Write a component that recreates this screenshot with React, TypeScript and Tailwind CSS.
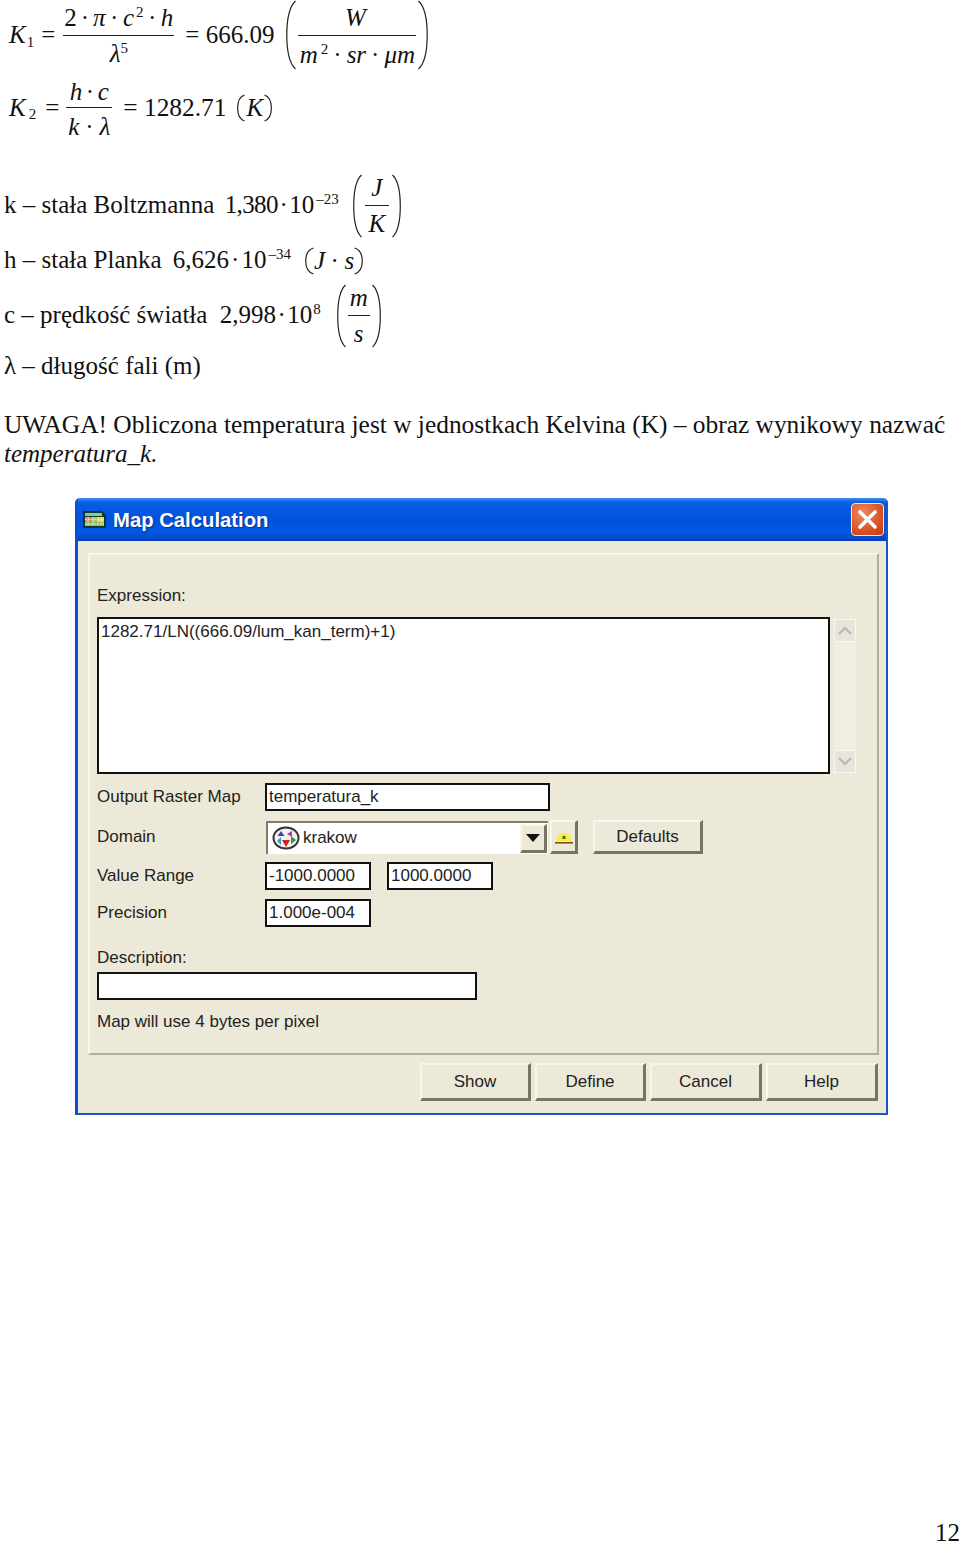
import React, { FC, ReactNode } from "react";

const Paren: FC<{ side: "l" | "r"; w: number; h: number }> = ({ side, w, h }) => {
    const d =
        side === "l"
            ? `M${w - 0.5} 1 C${w * 0.3} ${h * 0.1} ${w * 0.08} ${h * 0.3} ${w * 0.08} ${h / 2} C${w * 0.08} ${h * 0.7} ${w * 0.3} ${h * 0.9} ${w - 0.5} ${h - 1}`
            : `M0.5 1 C${w * 0.7} ${h * 0.1} ${w * 0.92} ${h * 0.3} ${w * 0.92} ${h / 2} C${w * 0.92} ${h * 0.7} ${w * 0.7} ${h * 0.9} 0.5 ${h - 1}`;
    return (
        <svg width={w} height={h} className="shrink-0" fill="none" stroke="#222" strokeWidth="1.2">
            <path d={d} />
        </svg>
    );
};

const Frac: FC<{ top: ReactNode; bottom: ReactNode; className: string }> = ({ top, bottom, className }) => (
    <div className={`flex flex-col items-center shrink-0 ${className}`}>
        <div className="h-[35px] flex items-center whitespace-pre">{top}</div>
        <div className="h-px w-full bg-[#222]" />
        <div className="h-[35px] flex items-center whitespace-pre">{bottom}</div>
    </div>
);

const Sup: FC<{ children: ReactNode }> = ({ children }) => (
    <span className="text-[15px] relative top-[-9px] ml-[2px]">{children}</span>
);

const Dot: FC<{ className: string }> = ({ className }) => <span className={className}>·</span>;

const Btn: FC<{ children?: ReactNode; className: string }> = ({ children, className }) => (
    <div className={`flex items-center justify-center shrink-0 border-t-2 border-l-2 border-r-[3px] border-b-[3px] border-t-[#f7f5ec] border-l-[#f7f5ec] border-r-[#77745f] border-b-[#77745f] bg-[#ece9d8] ${className}`}>
        {children}
    </div>
);

const Field: FC<{ children?: ReactNode; className: string }> = ({ children, className }) => (
    <div className={`border-2 border-[#111] bg-white pl-[2px] h-[28px] flex items-center shrink-0 ${className}`}>{children}</div>
);

const FieldRow: FC<{ label: string; className: string; children: ReactNode }> = ({ label, className, children }) => (
    <div className={`flex items-center ${className}`}>
        <div className="w-[168px] shrink-0 text-[#222]">{label}</div>
        {children}
    </div>
);

export default function App() {
    return (
        <div className="w-[960px] h-[1543px] bg-white text-[#111] overflow-hidden flex flex-col font-['Liberation_Serif',serif]">
            {/* formulas */}
            <div className="h-[70px] pl-[9px] flex items-center text-[25px] shrink-0">
                <i>K</i>
                <span className="text-[15px] relative top-[7px] ml-[1px]">1</span>
                <span className="ml-[7px]">=</span>
                <Frac
                    className="w-[111px] ml-[8px]"
                    top={
                        <span className="relative top-[1px]">
                            2<Dot className="mx-[4px]" /><i>π</i><Dot className="mx-[4.500px]" /><i>c</i>
                            <Sup>2</Sup>
                            <Dot className="mx-[4.500px]" /><i>h</i>
                        </span>
                    }
                    bottom={<span className="relative top-[1px]"><i>λ</i><span className="ml-[-2px]"><Sup>5</Sup></span></span>}
                />
                <span className="ml-[11px]">= 666.09</span>
                <div className="ml-[12px] flex items-center">
                    <Paren side="l" w={10} h={70} />
                    <Frac
                        className="w-[118px] mx-[2px]"
                        top={<i className="relative left-[-2px] top-[1px]">W</i>}
                        bottom={
                            <span className="relative top-[2px]">
                                <i>m</i><span className="ml-[1px]"><Sup>2</Sup></span>
                                <Dot className="mx-[5px]" /><i>sr</i><Dot className="mx-[5px]" /><i>μm</i>
                            </span>
                        }
                    />
                    <Paren side="r" w={10} h={70} />
                </div>
            </div>
            <div className="h-[71px] mt-[2px] pl-[9px] flex items-center text-[25px] shrink-0">
                <i>K</i>
                <span className="text-[15px] relative top-[7px] ml-[3px]">2</span>
                <span className="ml-[9px]">=</span>
                <Frac
                    className="w-[46px] ml-[7px]"
                    top={<span className="relative top-[2px]"><i>h</i><Dot className="mx-[3.500px]" /><i>c</i></span>}
                    bottom={<span className="relative top-[1px]"><i>k</i><Dot className="mx-[6px]" /><i>λ</i></span>}
                />
                <span className="ml-[11px] text-[25.400px]">= 1282.71</span>
                <span className="ml-[11px] flex items-center">
                    <Paren side="l" w={8} h={28} />
                    <i className="mx-[1px]">K</i>
                    <Paren side="r" w={8} h={28} />
                </span>
            </div>

            <div className="h-[65px] mt-[30px] pl-[4px] flex items-center text-[25px] whitespace-pre shrink-0">
                <span className="relative top-[-1px]">
                    k – stała Boltzmanna <span className="ml-[4px] tracking-[-0.600px]">1,380</span><Dot className="mx-[1.500px]" />10<Sup>–23</Sup>
                </span>
                <div className="ml-[14px] flex items-center">
                    <Paren side="l" w={9} h={64} />
                    <Frac className="w-[24px] mx-[3px]" top={<i>J</i>} bottom={<i>K</i>} />
                    <Paren side="r" w={9} h={64} />
                </div>
            </div>
            <div className="h-[40px] mt-[3px] pl-[4px] flex items-center text-[25px] whitespace-pre shrink-0">
                <span className="relative top-[-1px]">
                    h – stała Planka <span className="ml-[5px]">6,626</span><Dot className="mx-[2px]" />10<Sup>–34</Sup>
                </span>
                <span className="ml-[14px] flex items-center">
                    <Paren side="l" w={9} h={28} />
                    <span><i>J</i><Dot className="mx-[5.500px]" /><i>s</i></span>
                    <Paren side="r" w={9} h={28} />
                </span>
            </div>
            <div className="h-[65px] mt-[2px] pl-[4px] flex items-center text-[25px] whitespace-pre shrink-0">
                <span className="relative top-[-1px]">
                    c – prędkość światła <span className="ml-[6px]">2,998</span><Dot className="mx-[1.500px]" />10<span className="ml-[-1px]"><Sup>8</Sup></span>
                </span>
                <div className="ml-[16px] flex items-center">
                    <Paren side="l" w={9} h={64} />
                    <Frac className="w-[22px] mx-[2px]" top={<i>m</i>} bottom={<i>s</i>} />
                    <Paren side="r" w={9} h={64} />
                </div>
            </div>
            <div className="pl-[4px] text-[25px] leading-[36px] h-[36px] shrink-0">λ – długość fali (m)</div>
            <div className="mt-[25px] pl-[4px] text-[25.400px] leading-[30px] whitespace-nowrap shrink-0">
                UWAGA! Obliczona temperatura jest w jednostkach Kelvina (K) – obraz wynikowy nazwać
            </div>
            <div className="pl-[4px] text-[25px] leading-[30px] italic shrink-0">temperatura_k.</div>

            {/* Map Calculation dialog */}
            <div className="ml-[75px] mt-[29px] w-[813px] h-[617px] shrink-0 flex flex-col rounded-t-[5px] overflow-hidden border-l-[3px] border-r-2 border-b-2 border-l-[#0a50d0] border-r-[#1a55c4] border-b-[#1a55c4] bg-[#ece9d8] font-['Liberation_Sans',sans-serif] text-[17px] text-[#222]">
                <div className="-ml-[3px] -mr-[2px] h-[43px] shrink-0 flex items-center pl-[7px] pr-[4px] bg-[linear-gradient(#3f8ef0_0,#0a5ce8_10%,#0052dc_55%,#0258e4_80%,#0140b8_100%)]">
                    <svg width="25" height="19" viewBox="0 0 25 19" className="shrink-0">
                        <path d="M1 1h19l4 4v13H1z" fill="#17352c" />
                        <rect x="3" y="3" width="17" height="3" fill="#6fd0b0" />
                        <rect x="3" y="7" width="7" height="5" fill="#d98a7a" />
                        <rect x="10" y="7" width="6" height="5" fill="#a9c86a" />
                        <rect x="16" y="7" width="6" height="5" fill="#ecd84a" />
                        <rect x="3" y="12" width="19" height="4" fill="#8cc46c" />
                        <path d="M3 9.500h19M3 14h19M6 7v9M11 7v9M16 7v9M20 7v9" stroke="#f4f0d0" strokeWidth="1" strokeDasharray="1.500 1.500" />
                    </svg>
                    <div className="ml-[6px] relative top-[1px] text-white font-bold text-[20.300px] [text-shadow:1px_1px_1px_#0a2f90]">Map Calculation</div>
                    <div className="ml-auto w-[33px] h-[33px] rounded-[4px] border border-[#f2e9e4] bg-[radial-gradient(circle_at_35%_30%,#ee8a60,#d94f20_65%,#bd3c12)] flex items-center justify-center">
                        <svg width="21" height="21" viewBox="0 0 21 21" stroke="white" strokeWidth="3.600" strokeLinecap="round">
                            <path d="M3 3l15 15M18 3L3 18" />
                        </svg>
                    </div>
                </div>

                <div className="ml-[10px] mr-[7px] mt-[12px] h-[502px] shrink-0 border-2 border-t-[#f8f6ee] border-l-[#f8f6ee] border-r-[#b0ad9b] border-b-[#b0ad9b] pl-[7px] flex flex-col">
                    <div className="mt-[29px] leading-[24px]">Expression:</div>
                    <div className="mt-[9px] flex shrink-0">
                        <div className="w-[733px] h-[157px] border-2 border-[#111] bg-white pl-[2px] leading-[24px] pt-[1px]">
                            1282.71/LN((666.09/lum_kan_term)+1)
                        </div>
                        <div className="ml-[4px] w-[22px] h-[154px] mt-[2px] flex flex-col justify-between bg-[#f1efe2]">
                            <div className="h-[23px] bg-[#e8e6da] border border-[#f8f7f1] flex items-center justify-center">
                                <svg width="14" height="9" viewBox="0 0 14 9" fill="none" stroke="#bdbcb3" strokeWidth="2.400"><path d="M1 8l6-6 6 6" /></svg>
                            </div>
                            <div className="h-[23px] bg-[#e8e6da] border border-[#f8f7f1] flex items-center justify-center">
                                <svg width="14" height="9" viewBox="0 0 14 9" fill="none" stroke="#bdbcb3" strokeWidth="2.400"><path d="M1 1l6 6 6-6" /></svg>
                            </div>
                        </div>
                    </div>
                    <FieldRow label="Output Raster Map" className="mt-[9px]">
                        <Field className="w-[285px]">temperatura_k</Field>
                    </FieldRow>
                    <FieldRow label="Domain" className="mt-[9px]">
                        <div className="w-[282px] h-[33px] shrink-0 ml-[1px] flex items-center border-t-2 border-l-2 border-t-[#807d6b] border-l-[#807d6b] bg-white pl-[4px] pr-[1px]">
                            <svg width="28" height="24" viewBox="0 0 28 24" className="shrink-0">
                                <ellipse cx="14" cy="12" rx="12.500" ry="10.500" fill="#f3f2ee" stroke="#333" strokeWidth="2" />
                                <path d="M9 5l3.500 5h-7z" fill="#4a3fb0" />
                                <path d="M15 8l5-3v6z" fill="#b43aa8" />
                                <path d="M5 15l4-4v8z" fill="#3a9ad0" />
                                <path d="M10 14h8l-4 7z" fill="#d81e2a" />
                                <path d="M24 14l-5-4v8z" fill="#2d9a4a" />
                            </svg>
                            <span className="ml-[3px]">krakow</span>
                            <Btn className="ml-auto w-[27px] h-[29px] border-r-2 border-b-2">
                                <svg width="14" height="8" viewBox="0 0 14 8"><path d="M0 0h14L7 8z" fill="#111" /></svg>
                            </Btn>
                        </div>
                        <Btn className="ml-[2px] w-[28px] h-[34px] border-r-2 border-b-2">
                            <svg width="20" height="17" viewBox="0 0 20 17">
                                <path d="M2 13a8 8 0 0116 0z" fill="#f3f04a" />
                                <rect x="8.500" y="8" width="3" height="3" fill="#6a5a10" />
                                <rect x="1" y="14" width="18" height="1.600" fill="#8a4a20" />
                            </svg>
                        </Btn>
                        <Btn className="ml-[15px] w-[110px] h-[34px] border-r-2 border-b-2">Defaults</Btn>
                    </FieldRow>
                    <FieldRow label="Value Range" className="mt-[8px]">
                        <Field className="w-[106px]">-1000.0000</Field>
                        <Field className="ml-[16px] w-[106px]">1000.0000</Field>
                    </FieldRow>
                    <FieldRow label="Precision" className="mt-[9px]">
                        <Field className="w-[106px]">1.000e-004</Field>
                    </FieldRow>
                    <div className="mt-[19px] leading-[24px]">Description:</div>
                    <Field className="mt-[2px] w-[380px]" />
                    <div className="mt-[10px] leading-[24px]">Map will use 4 bytes per pixel</div>
                </div>

                <div className="mt-[8px] pr-[8px] flex justify-end gap-[4px]">
                    <Btn className="w-[111px] h-[38px]">Show</Btn>
                    <Btn className="w-[111px] h-[38px]">Define</Btn>
                    <Btn className="w-[112px] h-[38px]">Cancel</Btn>
                    <Btn className="w-[112px] h-[38px]">Help</Btn>
                </div>
            </div>

            <div className="mt-auto self-end text-[25px] leading-[20px]">12</div>
        </div>
    );
}
